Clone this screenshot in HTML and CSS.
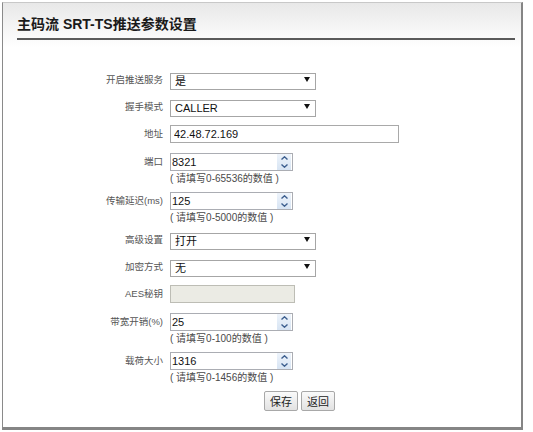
FILE: index.html
```html
<!DOCTYPE html>
<html lang="zh-CN">
<head>
<meta charset="utf-8">
<title>主码流 SRT-TS推送参数设置</title>
<link rel="stylesheet" href="styles.css">
</head>
<body>
<div class="panel">
  <div class="head">
    <h1 class="title">主码流 SRT-TS推送参数设置</h1>
  </div>
  <form class="form">
    <div class="field">
      <label class="label">开启推送服务</label>
      <div class="ctrl">
        <span class="select"><select><option>是</option><option>否</option></select></span>
      </div>
    </div>
    <div class="field">
      <label class="label">握手模式</label>
      <div class="ctrl">
        <span class="select"><select><option>CALLER</option><option>LISTENER</option></select></span>
      </div>
    </div>
    <div class="field">
      <label class="label">地址</label>
      <div class="ctrl">
        <input class="text wide" type="text" value="42.48.72.169">
      </div>
    </div>
    <div class="field">
      <label class="label">端口</label>
      <div class="ctrl">
        <span class="num"><input type="text" value="8321"><span class="spin"><span class="up"><svg width="7" height="4" viewBox="0 0 7 4"><polyline points="0.5,3.5 3.5,0.8 6.5,3.5"/></svg></span><span class="down"><svg width="7" height="4" viewBox="0 0 7 4"><polyline points="0.5,0.5 3.5,3.2 6.5,0.5"/></svg></span></span></span>
        <div class="hint">( 请填写0-65536的数值 )</div>
      </div>
    </div>
    <div class="field">
      <label class="label">传输延迟(ms)</label>
      <div class="ctrl">
        <span class="num"><input type="text" value="125"><span class="spin"><span class="up"><svg width="7" height="4" viewBox="0 0 7 4"><polyline points="0.5,3.5 3.5,0.8 6.5,3.5"/></svg></span><span class="down"><svg width="7" height="4" viewBox="0 0 7 4"><polyline points="0.5,0.5 3.5,3.2 6.5,0.5"/></svg></span></span></span>
        <div class="hint">( 请填写0-5000的数值 )</div>
      </div>
    </div>
    <div class="field">
      <label class="label">高级设置</label>
      <div class="ctrl">
        <span class="select"><select><option>打开</option><option>关闭</option></select></span>
      </div>
    </div>
    <div class="field">
      <label class="label">加密方式</label>
      <div class="ctrl">
        <span class="select"><select><option>无</option><option>AES-128</option><option>AES-256</option></select></span>
      </div>
    </div>
    <div class="field">
      <label class="label">AES秘钥</label>
      <div class="ctrl">
        <input class="text key" type="text" disabled>
      </div>
    </div>
    <div class="field">
      <label class="label">带宽开销(%)</label>
      <div class="ctrl">
        <span class="num"><input type="text" value="25"><span class="spin"><span class="up"><svg width="7" height="4" viewBox="0 0 7 4"><polyline points="0.5,3.5 3.5,0.8 6.5,3.5"/></svg></span><span class="down"><svg width="7" height="4" viewBox="0 0 7 4"><polyline points="0.5,0.5 3.5,3.2 6.5,0.5"/></svg></span></span></span>
        <div class="hint">( 请填写0-100的数值 )</div>
      </div>
    </div>
    <div class="field">
      <label class="label">载荷大小</label>
      <div class="ctrl">
        <span class="num"><input type="text" value="1316"><span class="spin"><span class="up"><svg width="7" height="4" viewBox="0 0 7 4"><polyline points="0.5,3.5 3.5,0.8 6.5,3.5"/></svg></span><span class="down"><svg width="7" height="4" viewBox="0 0 7 4"><polyline points="0.5,0.5 3.5,3.2 6.5,0.5"/></svg></span></span></span>
        <div class="hint">( 请填写0-1456的数值 )</div>
      </div>
    </div>
    <div class="actions">
      <button type="button" class="btn">保存</button>
      <button type="button" class="btn">返回</button>
    </div>
  </form>
</div>
</body>
</html>
```

FILE: styles.css
```css
html, body {
  margin: 0;
  padding: 0;
  background: #fff;
}

body {
  font-family: "Liberation Sans", Arial, "Noto Sans CJK SC", sans-serif;
  color: #222;
}

.panel {
  box-sizing: border-box;
  margin: 2px 0 0 2px;
  width: 521px;
  height: 428px;
  border-left: 1px solid #8a8a8a;
  border-top: 1px solid #c8c8c8;
  border-right: 2px solid #858585;
  border-bottom: 3px solid #858585;
  background: linear-gradient(#e8e8e8, #ffffff 44px);
}

.head {
  margin: 0 6px 0 14px;
  padding-top: 12px;
  border-bottom: 2px solid #5a5a5a;
  height: 23px;
}

.title {
  margin: 0;
  font-size: 14px;
  font-weight: bold;
  line-height: 19px;
  color: #1a1a1a;
}

/* form grid: right-aligned labels, controls in the second column */
.form {
  display: flex;
  flex-direction: column;
  gap: 10px;
  padding-top: 31px;
}

.field {
  display: grid;
  grid-template-columns: 160px 1fr;
  column-gap: 7px;
  align-items: start;
}

.label {
  text-align: right;
  font-size: 9.5px;
  color: #555;
  line-height: 17px;
}

.ctrl {
  display: flex;
  flex-direction: column;
  align-items: flex-start;
}

.select {
  position: relative;
  display: inline-block;
  width: 146px;
  height: 17px;
}

.select select {
  appearance: none;
  -webkit-appearance: none;
  box-sizing: border-box;
  width: 100%;
  height: 17px;
  margin: 0;
  padding: 0 0 0 4px;
  border: 1px solid #a6a6a6;
  border-radius: 0;
  background: #fff;
  font: 11px "Liberation Sans", Arial, "Noto Sans CJK SC", sans-serif;
  color: #111;
  line-height: 15px;
}

/* drop-down arrow */
.select::after {
  content: "";
  position: absolute;
  right: 6px;
  top: 6px;
  border-left: 3px solid transparent;
  border-right: 3px solid transparent;
  border-top: 5px solid #111;
  pointer-events: none;
}

.text {
  box-sizing: border-box;
  height: 18px;
  margin: 0;
  padding: 0 0 0 3px;
  border: 1px solid #a9a9a9;
  border-radius: 0;
  background: #fff;
  font: 11px "Liberation Sans", Arial, sans-serif;
  color: #111;
}

.wide {
  width: 229px;
}

.key {
  width: 125px;
  background: #ebebe4;
  border-color: #bdbdb5;
}

/* number field with spin buttons */
.num {
  box-sizing: border-box;
  display: inline-flex;
  width: 123px;
  height: 18px;
  border: 1px solid #abadb3;
  background: #fff;
}

.num input {
  flex: 1;
  min-width: 0;
  box-sizing: border-box;
  height: 16px;
  margin: 0;
  padding: 0 0 0 1px;
  border: 0;
  outline: none;
  background: transparent;
  font: 11px "Liberation Sans", Arial, sans-serif;
  color: #111;
}

.spin {
  display: flex;
  flex-direction: column;
  width: 14px;
  margin: 0 1px 0 0;
  background: linear-gradient(#eef4fb, #d7e4f3);
}

.spin span {
  flex: 1;
  display: flex;
  align-items: center;
  justify-content: center;
}

.spin svg polyline {
  fill: none;
  stroke: #3d5f8f;
  stroke-width: 1.4;
}

.hint {
  margin: 2px 0 -3px;
  font-size: 10px;
  line-height: 12px;
  color: #4a4a4a;
  white-space: pre;
}

.actions {
  display: flex;
  gap: 3px;
  padding-left: 261px;
}

.btn {
  box-sizing: border-box;
  height: 20px;
  width: 34px;
  margin: 0;
  padding: 0;
  border: 1px solid #a8a8a8;
  border-radius: 2px;
  background: linear-gradient(#fafafa, #e2e2e2);
  font: 11px "Noto Sans CJK SC", sans-serif;
  color: #222;
  line-height: 18px;
}
```
